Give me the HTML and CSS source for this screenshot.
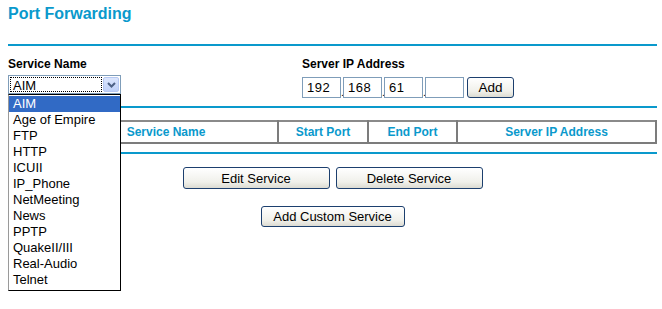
FILE: index.html
```html
<!DOCTYPE html>
<html lang="en">
<head>
    <meta charset="UTF-8">
    <title>Port Forwarding</title>
    <link rel="stylesheet" href="styles.css">
</head>
<body>
    <div class="page">
        <h1>Port Forwarding</h1>
        <div class="rule"></div>

        <div class="form-row">
            <div class="field service-field">
                <div class="label">Service Name</div>
                <div class="select">
                    <span class="select-value">AIM</span>
                    <span class="select-arrow">
                        <svg width="9" height="6" viewBox="0 0 9 6"><polyline points="1,1 4.5,4.5 8,1" fill="none" stroke="#4d6185" stroke-width="2"/></svg>
                    </span>
                </div>
                <ul class="select-list">
                    <li class="active">AIM</li>
                    <li>Age of Empire</li>
                    <li>FTP</li>
                    <li>HTTP</li>
                    <li>ICUII</li>
                    <li>IP_Phone</li>
                    <li>NetMeeting</li>
                    <li>News</li>
                    <li>PPTP</li>
                    <li>QuakeII/III</li>
                    <li>Real-Audio</li>
                    <li>Telnet</li>
                </ul>
            </div>
            <div class="field ip-field">
                <div class="label">Server IP Address</div>
                <div class="ip-row">
                    <input class="ip" type="text" value="192"><span class="dot">.</span>
                    <input class="ip" type="text" value="168"><span class="dot">.</span>
                    <input class="ip" type="text" value="61"><span class="dot">.</span>
                    <input class="ip" type="text" value="">
                    <button class="btn add-btn">Add</button>
                </div>
            </div>
        </div>

        <div class="rule rule-2"></div>

        <table class="rules-table">
            <tr>
                <th class="col-num"></th>
                <th class="col-name">Service Name</th>
                <th class="col-start">Start Port</th>
                <th class="col-end">End Port</th>
                <th>Server IP Address</th>
            </tr>
        </table>

        <div class="rule rule-3"></div>

        <div class="button-row">
            <button class="btn wide">Edit Service</button>
            <button class="btn wide">Delete Service</button>
        </div>
        <div class="button-row custom-row">
            <button class="btn">Add Custom Service</button>
        </div>
    </div>
</body>
</html>
```

FILE: styles.css
```css
html, body {
    min-height: 309px;
}

body {
    margin: 0;
    background-color: #fff;
    font-family: "Liberation Sans", Arial, sans-serif;
    color: #000;
}

.page {
    width: 649px;
    min-height: 300px;
    margin-left: 8px;
}

h1 {
    margin: 0;
    padding-top: 4px;
    font-size: 16px;
    line-height: 20px;
    color: #0a99cc;
}

.rule {
    height: 2px;
    background-color: #0a99cc;
    margin-top: 20px;
}

.form-row {
    display: flex;
    margin-top: 11px;
    height: 47px;
}

.field {
    position: relative;
}

.service-field {
    width: 294px;
    z-index: 2;
}

.label {
    font-size: 12px;
    line-height: 14px;
    font-weight: bold;
}

.select {
    display: flex;
    align-items: center;
    box-sizing: border-box;
    width: 113px;
    height: 19px;
    margin-top: 4px;
    border: 1px solid #7f9db9;
    padding: 1px;
}

.select-value {
    flex: 1;
    height: 15px;
    border: 1px dotted #000;
    font-size: 13px;
    line-height: 15px;
    padding-left: 2px;
    box-sizing: border-box;
}

.select-arrow {
    display: flex;
    align-items: center;
    justify-content: center;
    width: 16px;
    height: 15px;
    margin-left: 1px;
    border: 1px solid #b6c8f2;
    border-radius: 2px;
    background: linear-gradient(#dce6fd, #bfd0f8);
    box-sizing: border-box;
}

.select-list {
    position: absolute;
    top: 37px;
    left: 0;
    width: 113px;
    margin: 0;
    padding: 1px 0 2px 0;
    list-style: none;
    box-sizing: border-box;
    background-color: #fff;
    border: 1px solid #000;
    border-left-color: #9a9a9a;
    font-size: 13px;
}

.select-list li {
    height: 16px;
    line-height: 16px;
    padding-left: 4px;
}

.select-list li.active {
    background-color: #316ac5;
    color: #fff;
}

.ip-row {
    display: flex;
    align-items: flex-end;
    margin-top: 6px;
}

.ip {
    box-sizing: border-box;
    width: 39px;
    height: 21px;
    margin: 0;
    padding: 0 0 0 4px;
    border: 1px solid #7f9db9;
    font-family: "Liberation Sans", Arial, sans-serif;
    font-size: 13px;
    letter-spacing: 0.5px;
}

.dot {
    display: inline-block;
    width: 2px;
    font-size: 11px;
    line-height: 12px;
    overflow: visible;
}

.btn {
    box-sizing: border-box;
    height: 22px;
    padding: 0 10px;
    border: 1px solid #1c3f6e;
    border-radius: 3px;
    background: linear-gradient(#ffffff, #f0f0ea 70%, #dcdbd2);
    font-family: "Liberation Sans", Arial, sans-serif;
    font-size: 13px;
    color: #000;
    cursor: pointer;
}

.add-btn {
    width: 47px;
    height: 21px;
    margin-left: 3px;
    padding: 0;
    font-size: 13.5px;
}

.rule-2 {
    margin-top: 2px;
}

.rules-table {
    width: 649px;
    margin-top: 12px;
    border-collapse: collapse;
    border: 2px solid #7c7c7c;
}

.rules-table th {
    height: 20px;
    padding: 0;
    border: 2px solid #7c7c7c;
    border-top-color: #8a8a8a;
    font-size: 12px;
    color: #0a99cc;
    text-align: center;
}

.col-num {
    width: 43px;
}

.col-name {
    width: 222px;
}

.col-start {
    width: 88px;
}

.col-end {
    width: 87px;
}

.rule-3 {
    margin-top: 8px;
}

.button-row {
    display: flex;
    justify-content: center;
    gap: 6px;
    margin-top: 13px;
}

.btn.wide {
    width: 147px;
}

.custom-row {
    margin-top: 17px;
}

.custom-row .btn {
    height: 21px;
    width: 144px;
    padding: 0;
}
```
